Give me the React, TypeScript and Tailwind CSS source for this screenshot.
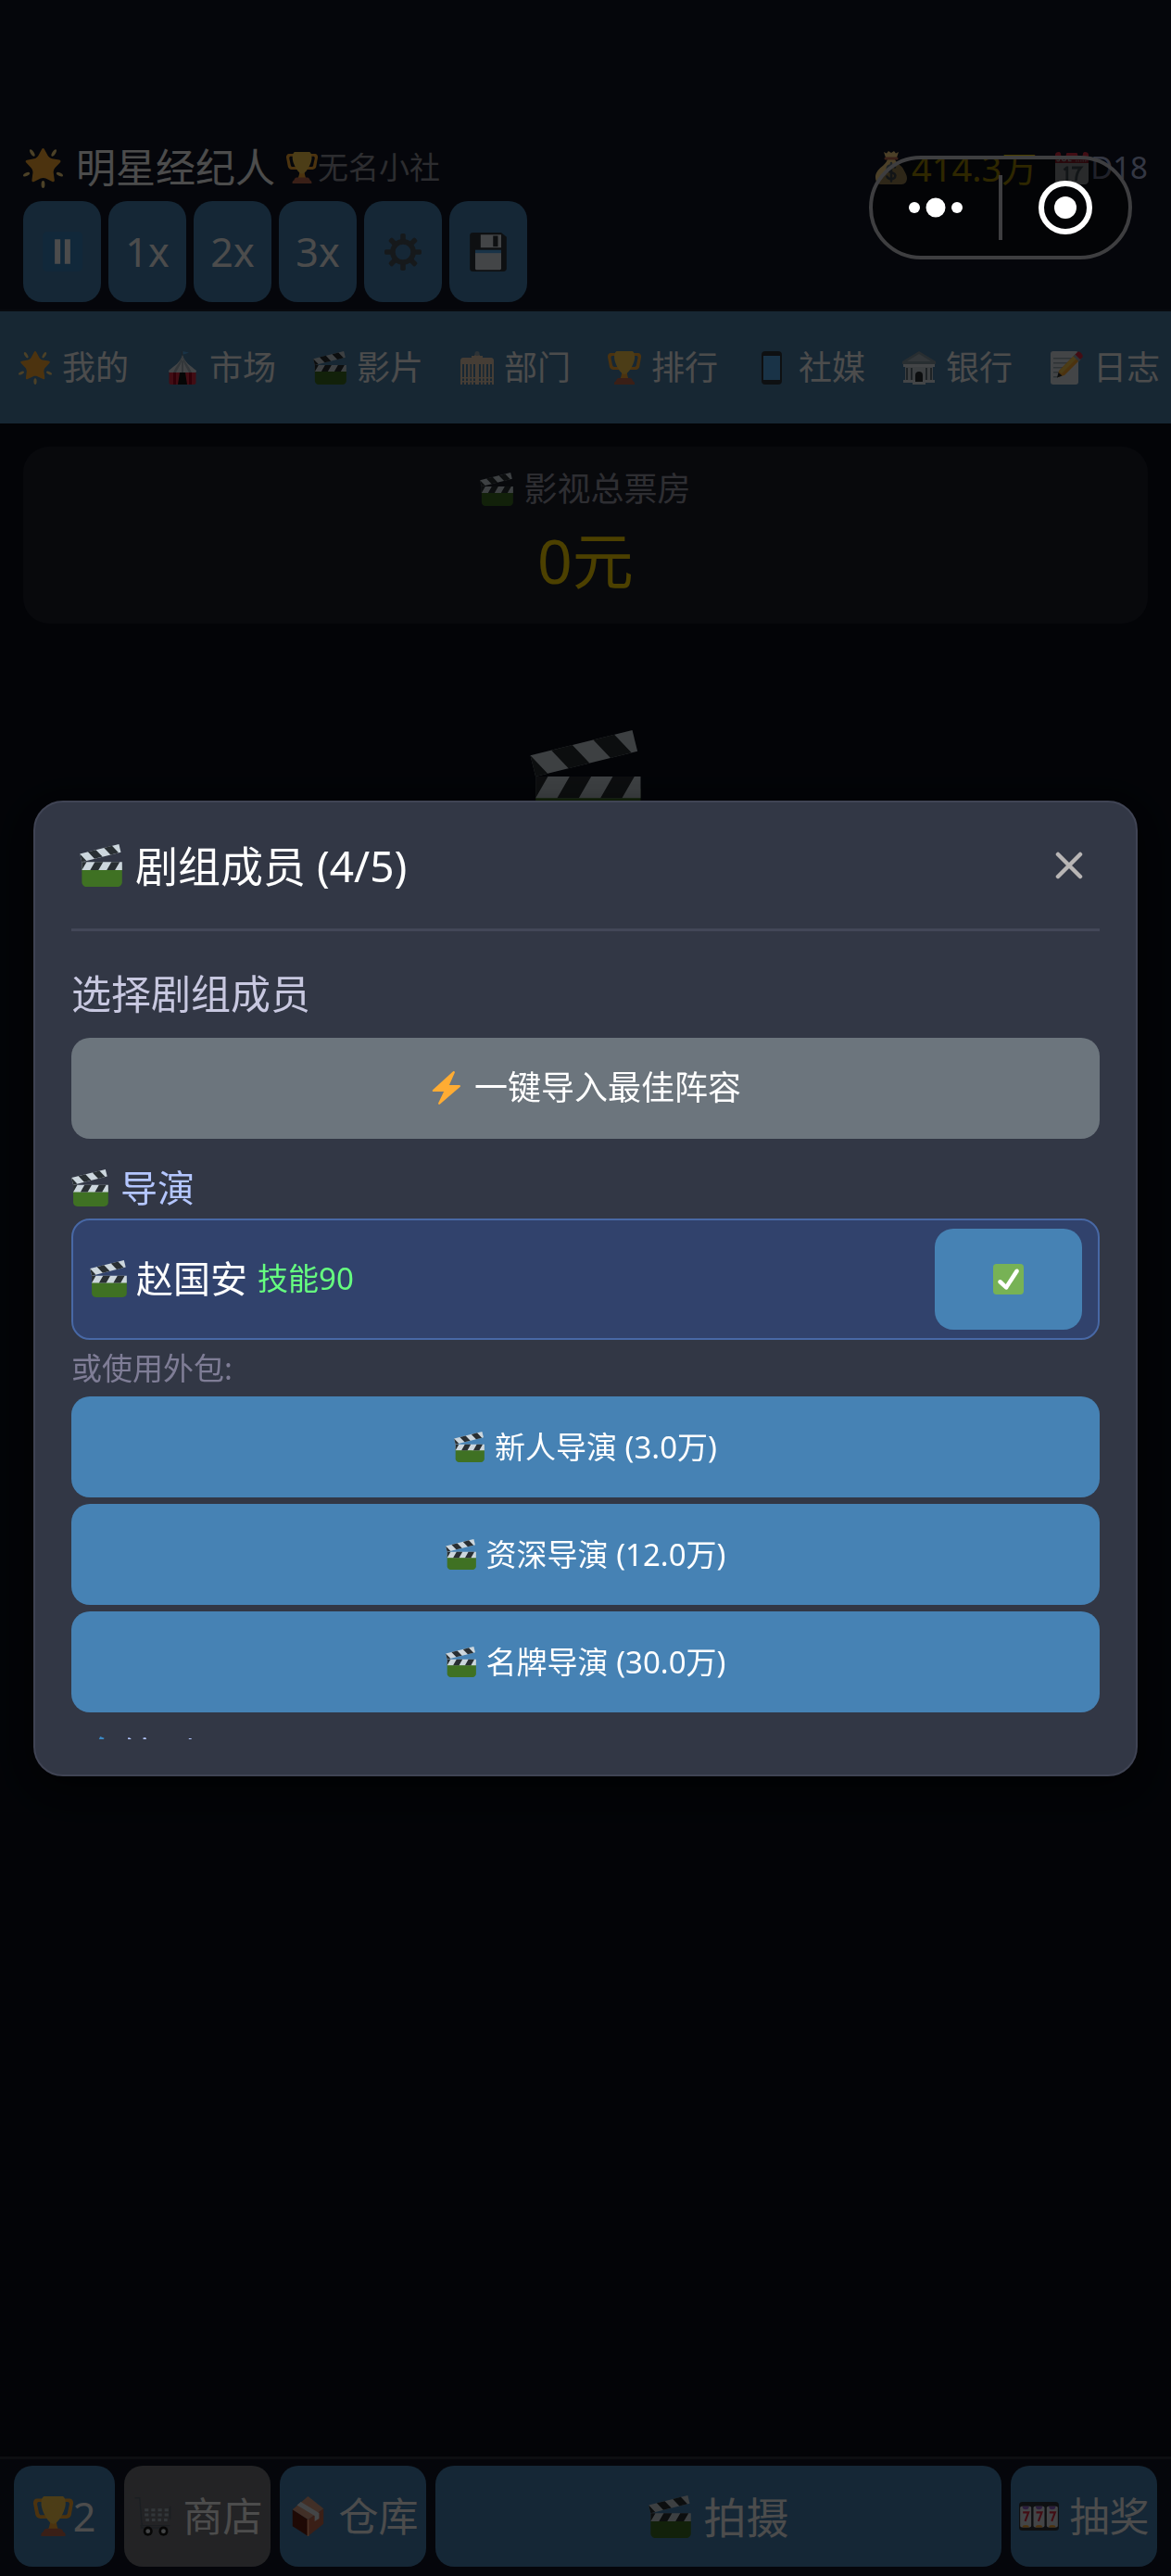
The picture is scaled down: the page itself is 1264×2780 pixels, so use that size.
import React, { useState } from "react";

type IconProps = { className?: string };

function Icon({ className = "", children }: { className?: string; children: React.ReactNode }) {
  return (
    <svg viewBox="0 0 36 36" className={`shrink-0 ${className}`} aria-hidden="true">
      {children}
    </svg>
  );
}

const Clapper = ({ className }: IconProps) => (
  <Icon className={className}>
    <path fill="#3F7123" d="M35.845 32c0 2.2-1.8 4-4 4h-26c-2.2 0-4-1.8-4-4V19h34z" />
    <path fill="#CCD6DD" d="M1.845 15h34v7h-34z" />
    <path fill="#292F33" d="M1.845 15h4l-4 7v-7zm11 0l-4 7h7l4-7zm14 0l-4 7h7l4-7z" />
    <path fill="#CCD6DD" d="M.155 8.207L33.148 0l1.69 6.792L1.845 15z" />
    <path
      fill="#292F33"
      d="M.155 8.207l5.572 5.827L1.845 15 .155 8.207zm19.158 2.448l-5.572-5.828-6.793 1.69 5.572 5.828 6.793-1.69zm13.586-3.38l-5.572-5.828-6.793 1.69 5.572 5.827 6.793-1.689z"
    />
  </Icon>
);

const GlowStar = ({ className }: IconProps) => (
  <Icon className={className}>
    <g fill="#FFD983">
      <ellipse cx="8.2" cy="4.2" rx="1.5" ry="3.6" transform="rotate(-32 8.2 4.2)" />
      <ellipse cx="27.8" cy="4.2" rx="1.5" ry="3.6" transform="rotate(32 27.8 4.2)" />
      <ellipse cx="3" cy="23.6" rx="3.2" ry="1.5" transform="rotate(-24 3 23.6)" />
      <ellipse cx="33" cy="23.6" rx="3.2" ry="1.5" transform="rotate(24 33 23.6)" />
      <ellipse cx="18" cy="32.6" rx="1.6" ry="3.4" />
    </g>
    <path
      fill="#FFAC33"
      d="M28.84 17.638c-.987 1.044-1.633 3.067-1.438 4.493l.892 6.441c.197 1.427-.701 2.087-1.996 1.469l-5.851-2.796c-1.295-.62-3.408-.611-4.7.018l-5.826 2.842c-1.291.629-2.193-.026-2.007-1.452l.843-6.449c.186-1.427-.475-3.444-1.47-4.481l-4.494-4.688c-.996-1.037-.655-2.102.755-2.365l6.37-1.188c1.41-.263 3.116-1.518 3.793-2.789L16.762.956c.675-1.271 1.789-1.274 2.473-.009L22.33 6.66c.686 1.265 2.4 2.507 3.814 2.758l6.378 1.141c1.412.252 1.761 1.314.774 2.359z"
    />
  </Icon>
);

const Trophy = ({ className }: IconProps) => (
  <Icon className={className}>
    <path
      fill="#FFAC33"
      d="M5.123 5h6C12.227 5 13 4.896 13 6V4c0-1.104-.773-2-1.877-2h-8c-2 0-3.583 2.125-3 5 0 0 1.791 9.375 1.917 9.958C2.373 18.5 4.164 20 6.081 20h6.958c1.105 0-.039-1.896-.039-3v-2c0 1.104-.773 2-1.877 2h-4c-1.104 0-1.833-1.042-2-2S3.539 7.667 3.539 7.667C3.206 5.75 4.018 5 5.123 5zm25.812 0h-6C23.831 5 22 4.896 22 6V4c0-1.104 1.831-2 2.935-2h8c2 0 3.584 2.125 3 5 0 0-1.633 9.419-1.771 10-.354 1.5-2.042 3-4 3h-7.146C21.914 20 22 18.104 22 17v-2c0 1.104 1.831 2 2.935 2h4c1.104 0 1.834-1.042 2-2s1.584-7.333 1.584-7.333C32.851 5.75 32.04 5 30.935 5zM20.832 22c0-6.958-2.709 0-2.709 0s-3-6.958-3 0-3.291 10-3.291 10h12.292s-3.292-3.042-3.292-10z"
    />
    <path
      fill="#FFCC4D"
      d="M29.123 6.577c0 6.775-6.77 18.423-11 18.423s-11-11.648-11-18.423C7.123 1.115 9.125 0 10.123 0h16c1 0 3 1.115 3 6.577z"
    />
    <path
      fill="#C1694F"
      d="M27 33H9v-1c0-1.1 1.5-3 3-3h12c1.5 0 3 1.900 3 3v1zm2 1.600V36H7v-1.400C7 33 8.500 32 10 32h16c1.500 0 3 1 3 2.600z"
    />
  </Icon>
);

const MoneyBag = ({ className }: IconProps) => (
  <Icon className={className}>
    <path
      fill="#FDD888"
      d="M31.900 21c-2.200-6-7.900-6.500-9.900-12h-8c-1.500 4-4 6-7 8.500C4 20 1 24 1 28c0 3 1 8 6 8h22c4 0 6-3 6-7 0-3-2-6-3.100-8zM12 7h12l2-6-3 1.500L21 0l-3 2-3-2-2 2.500L10 1z"
    />
    <path fill="#BF6952" d="M12 6.500h12a1.500 1.500 0 010 3H12a1.500 1.500 0 010-3z" />
    <path
      fill="none"
      stroke="#67757F"
      strokeWidth="2.600"
      strokeLinecap="round"
      d="M22 17.500c-1-1.500-2.500-2-4-2-2.500 0-4.200 1.500-4.200 3.600 0 5 8.600 2.800 8.600 7.500 0 2.200-2 3.600-4.400 3.600-2 0-3.800-.8-4.600-2.700M18 13v19.500"
    />
  </Icon>
);

const Calendar = ({ className }: IconProps) => (
  <Icon className={className}>
    <path fill="#E0E7EC" d="M36 32c0 2.200-1.800 4-4 4H4c-2.200 0-4-1.800-4-4V9h36z" />
    <path fill="#DD2E44" d="M30 3a3 3 0 01-6 0 1 1 0 00-1-1H13a1 1 0 00-1 1 3 3 0 01-6 0c0-1-.5-2-2-2-2.200 0-4 1-4 3v9h36V4c0-2-1.800-3-4-3-1.500 0-2 1-2 2z" />
    <path
      fill="none"
      stroke="#F5F8FA"
      strokeWidth="1.400"
      d="M4.500 5v4.300c0 2-2.500 2-2.700.2M7.500 5v3.500c0 2.800 4 2.800 4 0V5M14.500 5v5.500h3"
    />
    <path fill="none" stroke="#F4ABBA" strokeWidth="1.400" strokeDasharray="1.500 1" d="M22 8.500h12M22 10.700h12" />
    <path fill="none" stroke="#66757F" strokeWidth="2.800" d="M9.500 20.500l3-2.500h.3v14M18 18h9.500c-3.500 4-4.800 8-5 14" />
  </Icon>
);

const Pause = ({ className }: IconProps) => (
  <Icon className={className}>
    <rect width="36" height="36" rx="4" fill="#3B88C3" />
    <path fill="#fff" d="M11 7h5v22h-5zM20 7h5v22h-5z" />
  </Icon>
);

const Gear = ({ className }: IconProps) => (
  <Icon className={className}>
    <g fill="#4b545c">
      {[0, 45, 90, 135].map((a) => (
        <rect key={a} x="15.500" y="0" width="5" height="36" rx="1.500" transform={`rotate(${a} 18 18)`} />
      ))}
      <circle cx="18" cy="18" r="12.500" />
    </g>
    <circle cx="18" cy="18" r="7.500" fill="#4682b4" />
  </Icon>
);

const Floppy = ({ className }: IconProps) => (
  <Icon className={className}>
    <path fill="#31373D" d="M4 36c-2 0-3-1-3-3V3c0-2 1-3 3-3h26l5 4v29c0 2-1 3-3 3z" />
    <path fill="#E1E8ED" d="M11 2h19v12H11zM6 18h24v15c0 1-.5 1.500-1.500 1.500h-21C6.500 34.500 6 34 6 33z" />
    <path fill="#31373D" d="M22.500 3h4.500v10h-4.500z" />
    <path fill="#55ACEE" d="M6 16h24v3H6z" />
  </Icon>
);

const Circus = ({ className }: IconProps) => (
  <Icon className={className}>
    <path fill="#55ACEE" d="M18 0l7 1.500-4 1.500-3 .5z" />
    <path fill="#66757F" d="M17.300 0h1v6h-1z" />
    <path fill="#E1E8ED" d="M18 4c2 8 9 12 15 17 0 2-1.500 3-3 3H6c-1.500 0-3-1-3-3C9 16 16 12 18 4z" />
    <path fill="#AAB8C2" d="M18 5c0 7-4 12-7 18H8c3-7 8-12 10-18zm0 0c0 7 4 12 7 18h3c-3-7-8-12-10-18zM17 10h2v13h-2z" />
    <path fill="#DD2E44" d="M3.500 23h29v11c0 1-1 2-2 2h-25c-1 0-2-1-2-2z" />
    <path fill="#A0041E" d="M8 23h3v13H8zM25 23h3v13h-3z" />
    <path fill="#141414" d="M15 23h6l2 13H13z" />
  </Icon>
);

const Offices = ({ className }: IconProps) => (
  <Icon className={className}>
    <g fill="#E6CDB3">
      <path d="M3 7h9V5h3l1-2h4l1 2h3v2h9c2 0 3 1.500 3 3v4H0v-4c0-1.500 1-3 3-3z" />
      <path d="M0 12h2v24H0zM4 12h2v24H4zM8 12h2.500v24H8zM12 12h2v24h-2zM16 6h4v30h-4zM22 12h2v24h-2zM25.500 12H28v24h-2.500zM30 12h2v24h-2zM34 12h2v24h-2z" />
      <path d="M0 28h36v1.500H0zM0 32h36v1.500H0z" />
    </g>
    <circle cx="18" cy="2.500" r="2.500" fill="#99AAB5" />
  </Icon>
);

const Phone = ({ className }: IconProps) => (
  <Icon className={className}>
    <rect x="7" width="22" height="36" rx="4" fill="#31373D" />
    <path fill="#55ACEE" d="M9 5h18v26H9z" />
  </Icon>
);

const Bank = ({ className }: IconProps) => (
  <Icon className={className}>
    <path fill="#CCD6DD" d="M3 14h30v19H3z" />
    <path fill="#8899A6" d="M18 0l18 11v3H0v-3z" />
    <path fill="#AAB8C2" d="M18 3l13 8H5z" />
    <path fill="#66757F" d="M4 18h2v14H4zM9 18h2v14H9zM25 18h2v14h-2zM30 18h2v14h-2z" />
    <path fill="#E1E8ED" d="M1 14h34v3H1zM1 31h34v3H1zM11 33h14v3H11z" />
    <path fill="#292F33" d="M14 33v-7a4 4 0 018 0v7z" />
  </Icon>
);

const Memo = ({ className }: IconProps) => (
  <Icon className={className}>
    <path fill="#E1E8ED" d="M4 0h24c2 0 3 1 3 3v30c0 2-1 3-3 3H4c-2 0-3-1-3-3V3c0-2 1-3 3-3z" />
    <path fill="#99AAB5" d="M4 7h20v1.500H4zM4 12h16v1.500H4zM4 17h12v1.500H4zM4 22h8v1.500H4zM4 27h5v1.500H4z" />
    <path fill="#FFAC33" d="M27 4l6 5-17 17-7 2 1-7z" />
    <path fill="#FFCC4D" d="M28 3l3 3-18 18-3-2z" />
    <path fill="#99AAB5" d="M25.500 5.500L28 3l6 5.500-2.500 3z" />
    <path fill="#DD2E44" d="M27.500 3.500L30 1c2-2 7 3 5.500 5.500L33 9z" />
    <path fill="#292F33" d="M9.500 23L8 28.500l5.500-2z" />
  </Icon>
);

const Bolt = ({ className }: IconProps) => (
  <Icon className={className}>
    <path
      fill="#FFAC33"
      d="M32.938 15.651c-.196-.403-.6-.651-1.048-.651H20.925L26.890 1.460c.2-.5 0-1.060-.480-1.320C26.250.050 26.070 0 25.890 0c-.300 0-.600.120-.810.360L3.080 20.360c-.310.280-.410.720-.260 1.110.150.390.520.640.940.640H15.080L9.110 34.540c-.200.500 0 1.060.480 1.320.480.250 1.060.140 1.410-.270l21.780-18.830c.300-.300.390-.730.158-1.109z"
    />
  </Icon>
);

const Check = ({ className }: IconProps) => (
  <Icon className={className}>
    <rect width="36" height="36" rx="4" fill="#77B255" />
    <path
      fill="#fff"
      d="M29.280 6.362c-1.156-.751-2.704-.422-3.458.736L14.936 23.877l-5.029-4.650c-1.014-.938-2.596-.875-3.533.138-.937 1.014-.875 2.596.139 3.533l7.209 6.666c.480.445 1.090.665 1.696.665.673 0 1.534-.282 2.099-1.139.332-.506 12.500-19.270 12.500-19.270.751-1.159.421-2.707-.737-3.458z"
    />
  </Icon>
);

const Cart = ({ className }: IconProps) => (
  <Icon className={className}>
    <path fill="none" stroke="#5c6670" strokeWidth="1.200" d="M2 1.500h4.500l2 24.500M34 9v11.500M7 26.500h27M9 24.500l-1 4h24" />
    <path
      fill="#AAB8C2"
      d="M11 11h3.500v2.500H11zM17 11h3.500v2.500H17zM23 11h3.500v2.500H23zM29 11h3.500v2.500H29zM11 15.500h3.500V18H11zM17 15.500h3.500V18H17zM23 15.500h3.500V18H23zM29 15.500h3.500V18H29zM12 20h3v2.500h-3zM17.500 20h3v2.500h-3zM23 20h3v2.500h-3zM28.500 20h3v2.500h-3z"
    />
    <circle cx="14" cy="31.500" r="4.200" fill="#141414" />
    <circle cx="28" cy="31.500" r="4.200" fill="#141414" />
    <circle cx="14" cy="31.500" r="2" fill="#E1E8ED" />
    <circle cx="28" cy="31.500" r="2" fill="#E1E8ED" />
  </Icon>
);

const Box = ({ className }: IconProps) => (
  <Icon className={className}>
    <path fill="#662113" d="M4 12l14 9v15L4 27z" />
    <path fill="#C1694F" d="M18 21l14-10v14L18 36z" />
    <path fill="#D99E82" d="M18 0l14 11-14 10L4 12z" />
    <path fill="#E1E8ED" d="M8 8l3.500-3L28 15v5l-4 2.500v-5z" />
    <path fill="#FFAC83" d="M17.300 21h1.400v15h-1.400z" />
  </Icon>
);

const Slots = ({ className }: IconProps) => (
  <Icon className={className}>
    <rect y="5" width="36" height="26" rx="3" fill="#31373D" />
    {[1, 13, 25].map((x) => (
      <g key={x}>
        <rect x={x} y="9" width="10" height="19" rx="1.500" fill="#E1E8ED" />
        <path fill="#9266CC" d={`M${x + 2} 9h6a3 3 0 01-6 0z`} />
        <path fill="#FFAC33" d={`M${x + 2} 28a3 2 0 016 0z`} />
        <path fill="none" stroke="#DD2E44" strokeWidth="1.800" d={`M${x + 2.500} 14.500h5l-3 8`} />
      </g>
    ))}
  </Icon>
);

const Writing = ({ className }: IconProps) => (
  <Icon className={className}>
    <path fill="#3B88C3" d="M28 0l4 1.500L20 27l-3 2v-4z" />
    <path fill="#FFDC5D" d="M4 20c4-5 12-7 20-6l5 6c1 6-3 12-9 16H4z" />
  </Icon>
);

const Target = ({ className }: IconProps) => (
  <svg viewBox="0 0 58 58" className={className} aria-hidden="true">
    <circle cx="29" cy="29" r="26" fill="none" stroke="#fff" strokeWidth="6" />
    <circle cx="29" cy="29" r="12" fill="#fff" />
  </svg>
);

const Dots = ({ className }: IconProps) => (
  <svg viewBox="0 0 60 24" className={className} fill="#fff" aria-hidden="true">
    <circle cx="7" cy="12" r="6" />
    <circle cx="30" cy="12" r="10.500" />
    <circle cx="53" cy="12" r="6" />
  </svg>
);

const tabs = [
  { label: "我的", I: GlowStar },
  { label: "市场", I: Circus },
  { label: "影片", I: Clapper },
  { label: "部门", I: Offices },
  { label: "排行", I: Trophy },
  { label: "社媒", I: Phone },
  { label: "银行", I: Bank },
  { label: "日志", I: Memo },
];

const hires = ["新人导演 (3.0万)", "资深导演 (12.0万)", "名牌导演 (30.0万)"];

const control =
  "flex h-[109px] w-[84px] items-center justify-center rounded-[20px] bg-[#4682b4] text-[43px] leading-none";
const dock = "flex h-[109px] items-center justify-center rounded-[20px] text-[43px] leading-none";

function Page() {
  return (
    <div className="flex min-h-screen flex-col">
      <header className="border-b-2 border-[#1d2230] bg-[#111725] px-[25px] pt-[156px] pb-2">
        <div className="flex h-[50px] items-center whitespace-nowrap">
          <GlowStar className="size-[43px]" />
          <h1 className="ml-[14px] text-[43px] leading-[50px]">明星经纪人</h1>
          <Trophy className="ml-[12px] size-[34px]" />
          <span className="text-[33px] leading-[50px] text-[#9898a0]">无名小社</span>
          <span className="ml-auto flex items-center text-[38px] leading-[50px] text-[#ffd700]">
            <MoneyBag className="mr-1 size-[36px]" />
            414.3万
          </span>
          <span className="ml-5 flex items-center text-[33px] leading-[50px] text-[#b0b8e0]">
            <Calendar className="mr-[2px] size-[36px]" />
            D18
          </span>
        </div>
        <div className="mt-[11px] flex gap-2">
          <button aria-label="暂停" className={control}><Pause className="size-[43px]" /></button>
          <button className={control}>1x</button>
          <button className={control}>2x</button>
          <button className={control}>3x</button>
          <button aria-label="设置" className={control}><Gear className="size-[40px]" /></button>
          <button aria-label="保存" className={control}><Floppy className="size-[42px]" /></button>
        </div>
      </header>

      <nav className="flex h-[121px] overflow-x-auto bg-[#4d82ac] [scrollbar-width:none]">
        {tabs.map(({ label, I }) => (
          <button
            key={label}
            className="flex w-[159px] shrink-0 items-center justify-center gap-[11px] text-[36px] leading-none whitespace-nowrap"
          >
            <I className="size-[36px]" />
            {label}
          </button>
        ))}
      </nav>

      <main className="flex flex-1 flex-col items-center px-[25px] pt-[25px]">
        <section className="flex w-full flex-col items-center rounded-[28px] bg-[#1b1e2b] pt-[26px] pb-[31px]">
          <h2 className="flex items-center gap-[11px] text-[36px] leading-[40px] text-[#9c9ca8]">
            <Clapper className="size-[36px]" />
            影视总票房
          </h2>
          <p className="mt-[18px] text-[66px] leading-[76px] text-[#ffd700]">0元</p>
        </section>
        <Clapper className="mt-[115px] size-[120px]" />
      </main>

      <footer className="flex gap-[10px] border-t-3 border-[#2c303b] bg-[#111725] px-[15px] pt-[7px] pb-[10px] whitespace-nowrap">
        <button className={`${dock} w-[109px] bg-[#4682b4]`}>
          <Trophy className="size-[43px]" />2
        </button>
        <button className={`${dock} w-[158px] gap-3 bg-[#75757d]`}>
          <Cart className="size-[43px]" />
          商店
        </button>
        <button className={`${dock} w-[158px] gap-3 bg-[#4682b4]`}>
          <Box className="size-[43px]" />
          仓库
        </button>
        <button className="flex h-[109px] flex-1 items-center justify-center gap-[14px] rounded-[20px] bg-[#4682b4] text-[46px] leading-none">
          <Clapper className="size-[46px]" />
          拍摄
        </button>
        <button className={`${dock} w-[158px] gap-3 bg-[#4682b4]`}>
          <Slots className="size-[43px]" />
          抽奖
        </button>
      </footer>
    </div>
  );
}

function CrewDialog({ onClose }: { onClose: () => void }) {
  const [chosen, setChosen] = useState(true);
  return (
    <div className="fixed inset-0 z-10 flex items-center justify-center bg-black/70 px-[36px]">
      <div
        role="dialog"
        aria-labelledby="crew-title"
        className="w-full rounded-[32px] border-2 border-[#404454] bg-[#323745] px-[39px] pb-[38px] shadow-[0_12px_40px_rgba(0,0,0,0.6)]"
      >
        <div className="flex h-[139px] items-center justify-between border-b-3 border-[#434758] pr-[7px] pl-[9px]">
          <h2 id="crew-title" className="flex items-center gap-[14px] text-[46px] leading-[56px]">
            <Clapper className="size-[46px]" />
            剧组成员 (4/5)
          </h2>
          <button aria-label="关闭" onClick={onClose} className="flex size-[52px] items-center justify-center">
            <svg viewBox="0 0 30 30" className="size-[30px]" stroke="#b8b5b5" strokeWidth="4.500" strokeLinecap="round" aria-hidden="true">
              <path d="M3 3l24 24M27 3L3 27" />
            </svg>
          </button>
        </div>

        <div className="max-h-[872px] overflow-y-auto pt-[42px] [scrollbar-width:none]">
          <h3 className="text-[43px] leading-[52px] text-[#c8c8e0]">选择剧组成员</h3>
          <button className="mt-[21px] flex h-[109px] w-full items-center justify-center gap-3 rounded-[20px] bg-[#6c757d] text-[36px] leading-none">
            <Bolt className="size-[36px]" />
            一键导入最佳阵容
          </button>

          <h4 className="mt-[27px] flex items-center gap-[13px] text-[40px] leading-[52px] text-[#b4c6ff]">
            <Clapper className="size-[40px]" />
            导演
          </h4>
          <div className="mt-[7px] flex items-center rounded-[20px] border-2 border-[#4868a5] bg-[#31426c] py-[9px] pr-[17px] pl-[18px]">
            <Clapper className="size-[40px]" />
            <span className="ml-[10px] text-[40px] leading-[52px]">赵国安</span>
            <span className="ml-[11px] text-[33px] leading-[52px] text-[#66ff7f]">技能90</span>
            <button
              aria-label="选择赵国安"
              aria-pressed={chosen}
              onClick={() => setChosen(!chosen)}
              className="ml-auto flex h-[109px] w-[159px] items-center justify-center rounded-[20px] bg-[#4682b4]"
            >
              {chosen && <Check className="size-[33px]" />}
            </button>
          </div>

          <p className="mt-[11px] text-[33px] leading-[40px] text-[#7f7d96]">或使用外包:</p>
          <div className="mt-[10px] flex flex-col gap-[7px]">
            {hires.map((h) => (
              <button
                key={h}
                className="flex h-[109px] w-full items-center justify-center gap-[11px] rounded-[20px] bg-[#4682b4] text-[33px] leading-none"
              >
                <Clapper className="size-[33px]" />
                {h}
              </button>
            ))}
          </div>

          <h4 className="mt-5 flex items-center gap-[13px] text-[40px] leading-[52px] text-[#b4c6ff]">
            <Writing className="size-[40px]" />
            编剧
          </h4>
        </div>
      </div>
    </div>
  );
}

export default function App() {
  const [open, setOpen] = useState(true);
  return (
    <div className="min-h-screen bg-[#0a0e18] font-['Noto_Sans','Noto_Sans_CJK_SC',sans-serif] text-white">
      <Page />
      {open && <CrewDialog onClose={() => setOpen(false)} />}
      <div className="fixed top-[168px] right-[42px] z-20 flex h-[112px] w-[284px] items-center rounded-full border-4 border-[#3e3e40] bg-black/40">
        <button aria-label="更多" className="flex h-full flex-1 items-center justify-center">
          <Dots className="h-6 w-[60px]" />
        </button>
        <span className="h-[70px] w-1 bg-[#3e3e40]" />
        <button aria-label="退出" className="flex h-full flex-1 items-center justify-center">
          <Target className="size-[58px]" />
        </button>
      </div>
    </div>
  );
}
